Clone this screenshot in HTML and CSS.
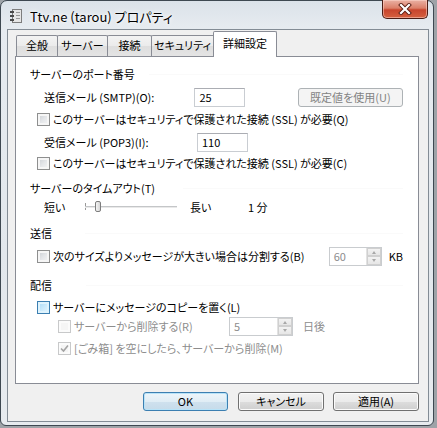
FILE: index.html
```html
<!DOCTYPE html>
<html lang="ja">
<head>
<meta charset="utf-8">
<title>Ttv.ne (tarou) プロパティ</title>
<link rel="stylesheet" href="styles.css">
</head>
<body>
<div class="window">
  <div class="titlebar">
    <svg class="app-icon" width="16" height="16" viewBox="0 0 16 16">
      <rect x="3.5" y="1.5" width="9" height="13" fill="#e6e6e6" stroke="#7d7d7d"/>
      <rect x="1" y="3" width="4" height="2" fill="#4a4a4a"/>
      <rect x="1" y="7" width="4" height="2" fill="#4a4a4a"/>
      <rect x="1" y="11" width="4" height="2" fill="#4a4a4a"/>
      <line x1="7" y1="4.5" x2="11" y2="4.5" stroke="#9a9a9a"/>
      <line x1="7" y1="7.5" x2="11" y2="7.5" stroke="#9a9a9a"/>
      <line x1="7" y1="10.5" x2="11" y2="10.5" stroke="#9a9a9a"/>
    </svg>
    <span class="title">Ttv.ne (tarou) プロパティ</span>
    <div class="close">
      <svg width="14" height="12" viewBox="0 0 14 12">
        <path d="M3 2 L11 10 M11 2 L3 10" stroke="#5a1e14" stroke-width="4" stroke-linecap="square"/>
        <path d="M3 2 L11 10 M11 2 L3 10" stroke="#ffffff" stroke-width="2.2" stroke-linecap="square"/>
      </svg>
    </div>
  </div>

  <div class="client">
    <div class="tabs">
      <div class="tab t1">全般</div>
      <div class="tab t2">サーバー</div>
      <div class="tab t3">接続</div>
      <div class="tab t4">セキュリティ</div>
      <div class="tab t5 active">詳細設定</div>
    </div>

    <div class="panel">
      <div class="row group mt9">
        <span class="group-title">サーバーのポート番号</span>
        <span class="rule rule-port"></span>
      </div>
      <div class="row tall field mt5">
        <span class="field-label">送信メール (SMTP)(O):</span>
        <span class="textbox">25</span>
        <span class="btn btn-disabled btn-default-val">既定値を使用(U)</span>
      </div>
      <div class="row check mt4">
        <span class="cb"></span>
        <span class="cb-text">このサーバーはセキュリティで保護された接続 (SSL) が必要(Q)</span>
      </div>
      <div class="row tall field mt5">
        <span class="field-label">受信メール (POP3)(I):</span>
        <span class="textbox">110</span>
      </div>
      <div class="row check mt3">
        <span class="cb"></span>
        <span class="cb-text">このサーバーはセキュリティで保護された接続 (SSL) が必要(C)</span>
      </div>

      <div class="row group mt9">
        <span class="group-title">サーバーのタイムアウト(T)</span>
        <span class="rule rule-timeout"></span>
      </div>
      <div class="row field mt3">
        <span class="slider-label">短い</span>
        <span class="slider">
          <span class="slider-tick"></span>
          <span class="slider-track"></span>
          <span class="slider-thumb"></span>
        </span>
        <span class="slider-max">長い</span>
        <span>1 分</span>
      </div>

      <div class="row group mt10">
        <span class="group-title">送信</span>
        <span class="rule rule-send"></span>
      </div>
      <div class="row tall check mt5">
        <span class="cb"></span>
        <span class="cb-text split-text">次のサイズよりメッセージが大きい場合は分割する(B)</span>
        <span class="spin spin-kb">
          <span class="spin-value">60</span>
          <span class="spin-buttons"><span class="spin-up"></span><span class="spin-down"></span></span>
        </span>
        <span class="unit-kb">KB</span>
      </div>

      <div class="row group mt11">
        <span class="group-title">配信</span>
        <span class="rule rule-deliver"></span>
      </div>
      <div class="row check mt6">
        <span class="cb cb-hot"></span>
        <span class="cb-text">サーバーにメッセージのコピーを置く(L)</span>
      </div>
      <div class="row tall check sub mt1">
        <span class="cb cb-disabled"></span>
        <span class="cb-text disabled delete-text">サーバーから削除する(R)</span>
        <span class="spin spin-days">
          <span class="spin-value">5</span>
          <span class="spin-buttons"><span class="spin-up"></span><span class="spin-down"></span></span>
        </span>
        <span class="unit-days disabled">日後</span>
      </div>
      <div class="row check sub mt4">
        <span class="cb cb-disabled">
          <svg width="9" height="9" viewBox="0 0 9 9"><path d="M1 4.5 L3.5 7 L8 1.5" fill="none" stroke="#a3a3a3" stroke-width="1.6"/></svg>
        </span>
        <span class="cb-text disabled">[ごみ箱] を空にしたら、サーバーから削除(M)</span>
      </div>
    </div>

    <div class="footer">
      <span class="btn btn-ok">OK</span>
      <span class="btn">キャンセル</span>
      <span class="btn">適用(A)</span>
    </div>
  </div>
</div>
</body>
</html>
```

FILE: styles.css
```css
* { box-sizing: border-box; }

html, body {
  margin: 0;
  padding: 0;
}

body {
  width: 437px;
  height: 428px;
  background: #9ea3a8;
  font-family: "Noto Sans CJK JP", "Noto Sans", sans-serif;
  font-size: 11px;
  line-height: 16px;
  color: #000;
  font-feature-settings: "palt";
  overflow: hidden;
}

.window {
  width: 434px;
  height: 426px;
  border: 1px solid #3e4851;
  border-radius: 7px 7px 6px 6px;
  background: linear-gradient(to bottom, #dbe2e9 0px, #e6ebf0 26px, #e2e7ec 60%, #e7ebef 100%);
  padding: 0 4px 4px 6px;
  display: flex;
  flex-direction: column;
}

/* ---------- title bar ---------- */
.titlebar {
  height: 28px;
  display: flex;
  align-items: center;
  flex: none;
}

.app-icon {
  margin-left: 2px;
  margin-top: 2px;
  flex: none;
}

.title {
  margin-left: 5px;
  margin-top: 3px;
  font-size: 13px;
  line-height: 18px;
  color: #000;
  text-shadow: 0 0 6px #fff, 0 0 3px #fff;
  white-space: nowrap;
}

.close {
  margin-left: auto;
  margin-right: 1px;
  align-self: flex-start;
  margin-top: -1px;
  width: 46px;
  height: 19px;
  border: 1px solid #4a1d15;
  border-top: none;
  border-radius: 0 0 5px 5px;
  background: linear-gradient(to bottom, #eab1a4 0%, #db7f69 45%, #c8452d 55%, #d5603f 100%);
  box-shadow: inset 0 0 0 1px rgba(255, 220, 210, 0.5);
  display: flex;
  align-items: center;
  justify-content: center;
}

/* ---------- client area ---------- */
.client {
  flex: none;
  width: 422px;
  height: 393px;
  background: #f0f0f0;
  border: 1px solid #838c95;
  display: flex;
  flex-direction: column;
}

.tabs {
  display: flex;
  align-items: flex-end;
  height: 26px;
  margin-left: 8px;
  flex: none;
}

.tab {
  height: 21px;
  border: 1px solid #898c95;
  border-bottom: none;
  border-radius: 2px 2px 0 0;
  background: linear-gradient(to bottom, #f3f3f3 0%, #ebebeb 50%, #dedede 50%, #e4e4e4 100%);
  text-align: center;
  line-height: 19px;
  margin-left: -1px;
  white-space: nowrap;
}

.t1 { width: 42px; margin-left: 0; }
.t2 { width: 51px; }
.t3 { width: 45px; }
.t4 { width: 65px; padding-right: 2px; }
.t5 { width: 64px; }

.tab.active {
  position: relative;
  z-index: 1;
  height: 26px;
  margin-left: -3px;
  margin-bottom: -1px;
  background: #fff;
  line-height: 22px;
}

.panel {
  flex: none;
  height: 328px;
  margin-left: 7px;
  width: 404px;
  background: #fff;
  border: 1px solid #898c95;
  display: flex;
  flex-direction: column;
  padding-right: 15px;
}

/* ---------- rows ---------- */
.row {
  display: flex;
  align-items: center;
  height: 16px;
  flex: none;
  white-space: nowrap;
}

.row.tall { height: 20px; }

.mt1 { margin-top: 1px; }
.mt3 { margin-top: 3px; }
.mt4 { margin-top: 4px; }
.mt5 { margin-top: 5px; }
.mt6 { margin-top: 6px; }
.mt9 { margin-top: 9px; }
.mt10 { margin-top: 10px; }
.mt11 { margin-top: 11px; }

.group { padding-left: 14px; }
.field { padding-left: 28px; }
.check { padding-left: 21px; }
.check.sub { padding-left: 42px; }

.rule {
  margin-left: auto;
  height: 1px;
  background: #d5d8dc;
  border-bottom: 1px solid #fafafa;
}
.rule-port { width: 254px; }
.rule-timeout { width: 220px; }
.rule-send { width: 318px; }
.rule-deliver { width: 317px; }

.field-label { width: 153px; }

.textbox {
  width: 51px;
  height: 19px;
  border: 1px solid #c9cdd2;
  border-top-color: #abadb3;
  background: #fff;
  padding-left: 4px;
  line-height: 17px;
}

.btn {
  height: 19px;
  border: 1px solid #707070;
  border-radius: 3px;
  background: linear-gradient(to bottom, #f2f2f2 0%, #ebebeb 50%, #dddddd 50%, #cfcfcf 100%);
  box-shadow: inset 0 0 0 1px #fbfbfb;
  text-align: center;
  line-height: 17px;
  white-space: nowrap;
}

.btn-disabled {
  border-color: #adb2b5;
  background: #f4f4f4;
  box-shadow: none;
  color: #838383;
}

.btn-default-val {
  width: 107px;
  margin-left: 53px;
}

/* ---------- checkboxes ---------- */
.cb {
  width: 13px;
  height: 13px;
  flex: none;
  border: 1px solid #8e8f8f;
  background: linear-gradient(135deg, #c9cdd2 0%, #e4e6e9 50%, #f7f7f7 100%);
  box-shadow: inset 0 0 0 2px #f6f6f6;
  display: flex;
  align-items: center;
  justify-content: center;
}

.cb-hot {
  border-color: #3c7fb1;
  background: linear-gradient(135deg, #a9d9f6 0%, #c9e9fb 50%, #e8f6fd 100%);
  box-shadow: inset 0 0 0 2px #def3fd;
}

.cb-disabled {
  border-color: #c8c9ca;
  background: #f5f5f5;
  box-shadow: inset 0 0 0 2px #fbfbfb;
}

.cb-text { margin-left: 3px; }

.disabled { color: #8d8d8d; }

.split-text { width: 277px; }
.delete-text { width: 155px; }

/* ---------- slider ---------- */
.slider-label { width: 41px; }

.slider {
  position: relative;
  width: 92px;
  height: 16px;
  flex: none;
}

.slider-track {
  position: absolute;
  left: 0;
  right: 0;
  top: 7px;
  height: 2px;
  background: #c4c6c8;
  border-bottom: 1px solid #e9e9e9;
}

.slider-tick {
  position: absolute;
  left: 0;
  top: 4px;
  width: 1px;
  height: 7px;
  background: #9a9a9a;
}

.slider-thumb {
  position: absolute;
  left: 10px;
  top: 2px;
  width: 6px;
  height: 11px;
  border: 1px solid #7d7d7d;
  border-radius: 2px;
  background: linear-gradient(to right, #f4f4f4, #d6d6d6);
}

.slider-max {
  margin-left: 13px;
  width: 58px;
}

/* ---------- spin boxes ---------- */
.spin {
  height: 19px;
  border: 1px solid #c9cccf;
  background: #fff;
  display: flex;
  flex: none;
  color: #8d8d8d;
}

.spin-value {
  flex: 1;
  padding-left: 4px;
  line-height: 17px;
}

.spin-buttons {
  width: 15px;
  display: flex;
  flex-direction: column;
  border-left: 1px solid #e2e2e2;
}

.spin-up, .spin-down {
  flex: 1;
  position: relative;
  background: linear-gradient(to bottom, #f3f3f3, #e6e6e6);
  border: 1px solid #d0d0d0;
}

.spin-up::after, .spin-down::after {
  content: "";
  position: absolute;
  left: 4px;
  top: 2px;
  border-left: 2.5px solid transparent;
  border-right: 2.5px solid transparent;
}

.spin-up::after { border-bottom: 3px solid #a8a8a8; }
.spin-down::after { border-top: 3px solid #a8a8a8; top: 2px; }

.spin-kb { width: 53px; }
.unit-kb { margin-left: 7px; }

.spin-days { width: 64px; }
.unit-days { margin-left: 10px; }

/* ---------- footer ---------- */
.footer {
  display: flex;
  justify-content: flex-end;
  align-items: flex-start;
  gap: 9px;
  padding-top: 8px;
  padding-right: 9px;
}

.footer .btn { width: 86px; }

.footer .btn-ok {
  width: 85px;
  margin-right: 1px;
  border-color: #3c7fb1;
  background: linear-gradient(to bottom, #edf5fa 0%, #e0edf5 50%, #cfe1ee 50%, #c6dbea 100%);
  box-shadow: inset 0 0 0 1px #b8e3f8;
}
```
